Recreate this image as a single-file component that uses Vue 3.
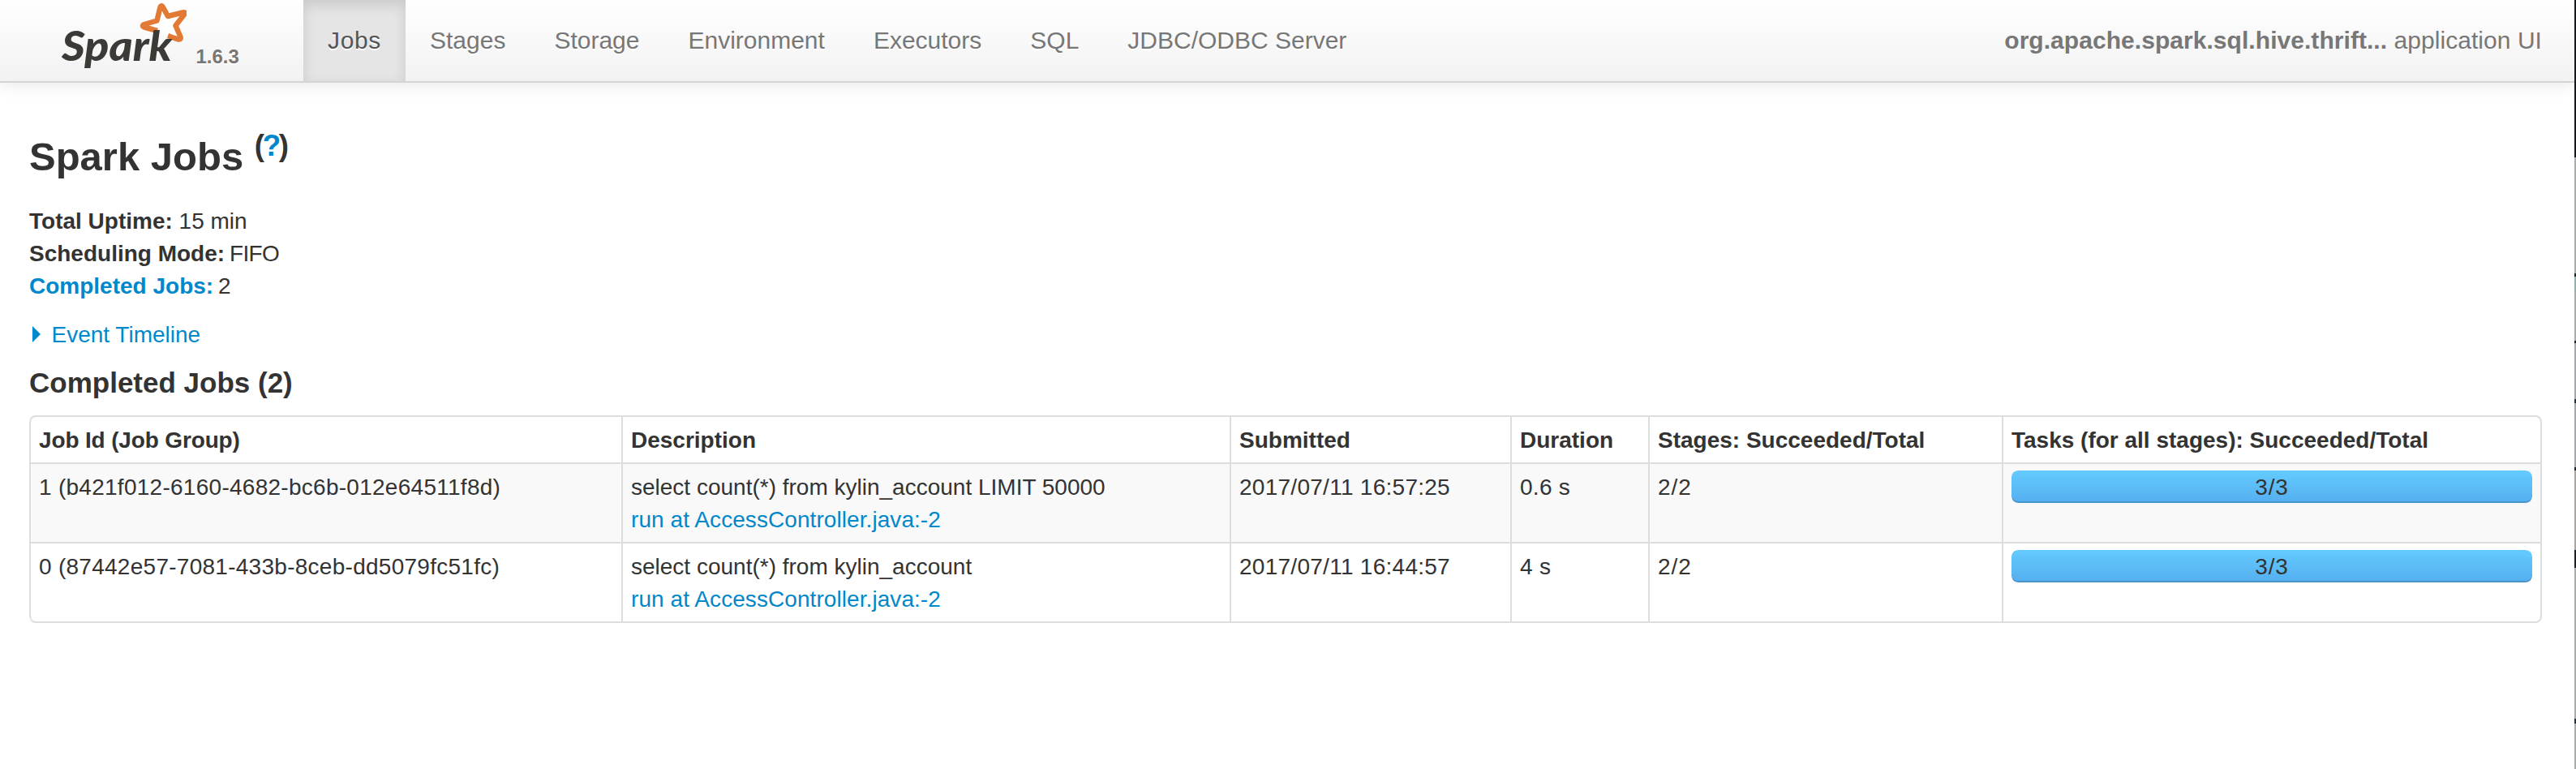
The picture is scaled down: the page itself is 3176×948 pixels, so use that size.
<script setup>
const tabs = ['Jobs', 'Stages', 'Storage', 'Environment', 'Executors', 'SQL', 'JDBC/ODBC Server']
const activeTab = 'Jobs'

const columns = [
  'Job Id (Job Group)',
  'Description',
  'Submitted',
  'Duration',
  'Stages: Succeeded/Total',
  'Tasks (for all stages): Succeeded/Total',
]

const jobs = [
  {
    id: '1 (b421f012-6160-4682-bc6b-012e64511f8d)',
    description: 'select count(*) from kylin_account LIMIT 50000',
    link: 'run at AccessController.java:-2',
    submitted: '2017/07/11 16:57:25',
    duration: '0.6 s',
    stages: '2/2',
    done: 3,
    total: 3,
  },
  {
    id: '0 (87442e57-7081-433b-8ceb-dd5079fc51fc)',
    description: 'select count(*) from kylin_account',
    link: 'run at AccessController.java:-2',
    submitted: '2017/07/11 16:44:57',
    duration: '4 s',
    stages: '2/2',
    done: 3,
    total: 3,
  },
]
</script>

<template>
  <div class="page">
    <div class="content">
      <nav class="navbar">
        <div class="brand">
          <svg class="logo" width="154" height="90" viewBox="0 0 154 90">
            <path
              class="star"
              d="M118 38 L102 33.500 Q98 31.500 102 30 L117.500 25.500 L121.500 9 Q123 5.500 125 9 L131 20 L149 15.500 Q154 14.500 151 18 L140.500 31.500 L146.500 45.500 Q147.500 49 143.500 48.500 L131 44"
            />
            <text class="wordmark" x="0" y="75" textLength="136" lengthAdjust="spacingAndGlyphs">Spark</text>
          </svg>
          <span class="version">1.6.3</span>
        </div>
        <ul class="tabs">
          <li v-for="tab in tabs" :key="tab" :class="{ active: tab === activeTab }">
            <a>{{ tab }}</a>
          </li>
        </ul>
        <p class="app-name"><strong>org.apache.spark.sql.hive.thrift...</strong> application UI</p>
      </nav>

      <main class="main">
        <h3>Spark Jobs <sup>(<a>?</a>)</sup></h3>
        <ul class="summary">
          <li><strong>Total Uptime:</strong> 15 min</li>
          <li><strong>Scheduling Mode:</strong> <span class="mode">FIFO</span></li>
          <li><a><strong>Completed Jobs:</strong></a> <span class="count">2</span></li>
        </ul>
        <div class="timeline"><span class="arrow"></span><a>Event Timeline</a></div>
        <h4>Completed Jobs (2)</h4>

        <table>
          <colgroup>
            <col class="c-id" /><col class="c-desc" /><col class="c-sub" />
            <col class="c-dur" /><col class="c-stages" /><col class="c-tasks" />
          </colgroup>
          <thead>
            <tr>
              <th v-for="c in columns" :key="c">{{ c }}</th>
            </tr>
          </thead>
          <tbody>
            <tr v-for="job in jobs" :key="job.id">
              <td class="num">{{ job.id }}</td>
              <td>
                <div>{{ job.description }}</div>
                <a class="run">{{ job.link }}</a>
              </td>
              <td class="num">{{ job.submitted }}</td>
              <td class="num">{{ job.duration }}</td>
              <td class="frac">{{ job.stages }}</td>
              <td>
                <div class="progress">
                  <span class="label frac">{{ job.done }}/{{ job.total }}</span>
                  <div class="bar" :style="{ width: (job.done / job.total) * 100 + '%' }"></div>
                </div>
              </td>
            </tr>
          </tbody>
        </table>
      </main>
    </div>
    <div class="edge"></div>
  </div>
</template>

<style>
body {
  background: #fff;
}
</style>

<style scoped>
.page {
  display: flex;
  width: 3176px;
  height: 948px;
  overflow: hidden;
  color: #333;
  font: 28px/40px "Liberation Sans", Arial, sans-serif;
}
.content {
  width: 3174px;
  height: 948px;
  overflow: hidden;
}
.edge {
  width: 2px;
  background: linear-gradient(
    #15191c 194px, #a9acad 194px 337px, #22262a 337px 341px, #96b0b0 341px 358px,
    #a9acad 358px 420px, #22262a 420px 423px, #a3a8ab 423px 492px, #25313b 492px 497px,
    #a3a8ab 497px 576px, #25262a 576px 580px, #a9a5a3 580px 678px, #1d2124 678px 700px,
    #a9acad 700px 886px, #25313b 886px 892px, #a9acad 892px
  );
}
a {
  color: #08c;
}

.navbar {
  box-sizing: border-box;
  display: flex;
  height: 102px;
  border-bottom: 2px solid #d4d4d4;
  background: linear-gradient(#fff, #f2f2f2);
  box-shadow: 0 2px 20px rgba(0, 0, 0, 0.1);
  color: #777;
  font-size: 30px;
}
.brand {
  display: flex;
  width: 374px;
  box-sizing: border-box;
  padding-left: 76px;
}
.logo {
  flex: none;
}
.star {
  fill: #fff;
  stroke: #e27a35;
  stroke-width: 6.5px;
  stroke-linejoin: round;
}
.wordmark {
  font: italic 900 51px Lato, sans-serif;
  fill: #3c3a36;
}
.version {
  margin: 50px 0 0 11.5px;
  font-size: 24px;
  font-weight: bold;
  text-shadow: 0 2px 0 #fff;
}
.tabs {
  display: flex;
  margin: 0;
  padding: 0;
  list-style: none;
}
.tabs li {
  height: 40px;
  padding: 30px;
  text-shadow: 0 2px 0 #fff;
}
.tabs a {
  color: #777;
}
.tabs .active {
  background: #e5e5e5;
  box-shadow: inset 0 6px 16px rgba(0, 0, 0, 0.125);
  letter-spacing: 0.65px;
}
.tabs .active a {
  color: #555;
}
.app-name {
  margin: 30px 40px 0 auto;
  letter-spacing: 0.05px;
}

.main {
  padding: 51px 40px 0 36px;
}
h3,
h4 {
  margin: 0;
}
h3 {
  font-size: 49px;
  line-height: 80px;
}
sup {
  position: relative;
  top: -0.5em;
  font-size: 36.75px;
  line-height: 0;
  vertical-align: baseline;
  letter-spacing: -2.4px;
}
.summary {
  margin: 20px 0 0;
  padding: 0;
  list-style: none;
}
.mode {
  margin-left: -2px;
  letter-spacing: -0.6px;
}
.count {
  margin-left: -2px;
}
.timeline {
  display: flex;
  align-items: center;
  margin-top: 20px;
}
.arrow {
  margin: 0 13.5px 2px 4px;
  border: solid transparent;
  border-width: 10px 0 10px 10px;
  border-left-color: #08c;
}
h4 {
  margin-top: 19px;
  font-size: 35px;
  line-height: 40px;
}

table {
  width: 3098px;
  margin-top: 20px;
  table-layout: fixed;
  border: 2px solid #ddd;
  border-left: 0;
  border-radius: 8px;
  border-collapse: separate;
  border-spacing: 0;
}
.c-id { width: 730px; }
.c-desc { width: 750px; }
.c-sub { width: 346px; }
.c-dur { width: 170px; }
.c-stages { width: 436px; }
.c-tasks { width: 664px; }
th,
td {
  padding: 9px 10px 7px;
  border-left: 2px solid #ddd;
  text-align: left;
  vertical-align: top;
}
td {
  border-top: 2px solid #ddd;
}
thead th:first-child {
  border-top-left-radius: 8px;
  letter-spacing: -0.15px;
}
tbody tr:last-child td:first-child {
  border-bottom-left-radius: 8px;
}
tbody tr:nth-child(odd) td {
  background: #f9f9f9;
}
.run {
  letter-spacing: 0.07px;
}
.num {
  letter-spacing: 0.27px;
}
.frac {
  letter-spacing: 0.9px;
}
.progress {
  position: relative;
  height: 40px;
  margin-top: -1px;
  overflow: hidden;
  border-radius: 8px;
}
.bar {
  height: 40px;
  border-radius: 8px;
  background: linear-gradient(#64cbff, #54aeee);
  box-shadow: inset 0 -2px 0 rgba(0, 0, 0, 0.15);
}
.label {
  position: absolute;
  inset: 1px 0 0;
  text-align: center;
}
</style>
